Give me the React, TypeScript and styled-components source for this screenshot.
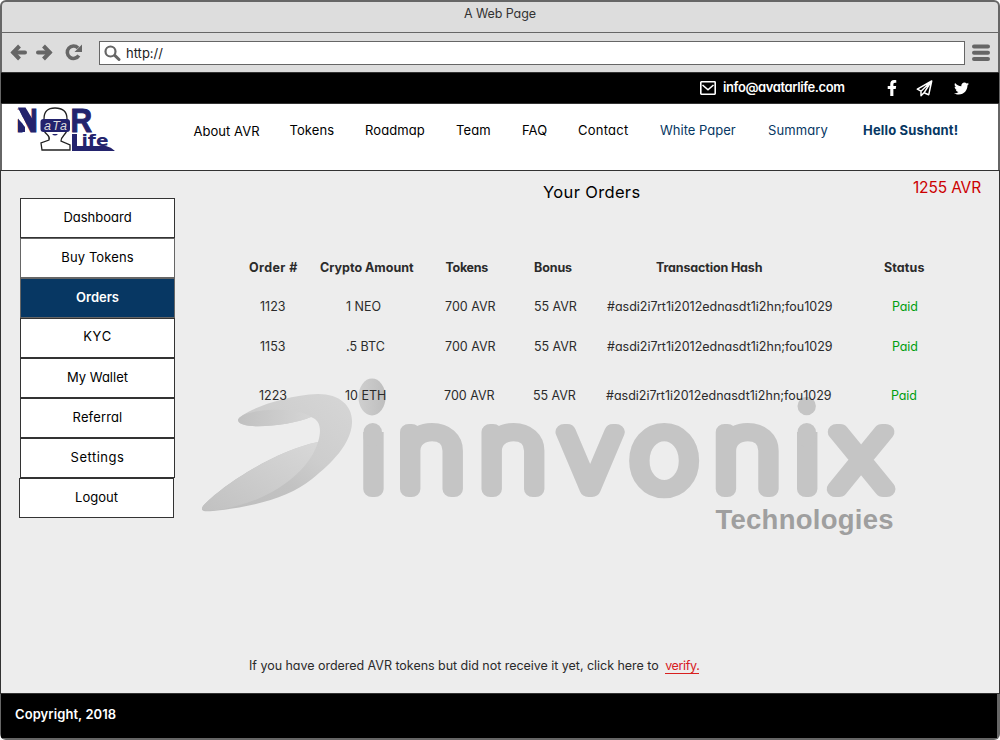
import React from "react";
import styled, { createGlobalStyle } from "styled-components";
import { FaFacebookF, FaTwitter } from "react-icons/fa";

const Global = createGlobalStyle`
  * { box-sizing: border-box; }
  body { margin: 0; background: #fff; }
  #root { font-family: Inter, "Liberation Sans", sans-serif; font-feature-settings: "cv11"; color: #000; font-size: 13px; }
`;

const Window = styled.div`
  width: 1000px; height: 740px; background: #666; border-radius: 6px;
  padding-top: 2px; display: flex; flex-direction: column; overflow: hidden;
`;
const TitleBar = styled.div`
  height: 30px; margin: 0 2px; background: #ddd; color: #333; font-size: 12.5px; letter-spacing: -0.1px;
  display: flex; justify-content: center; padding-top: 4px; line-height: 16px; border-top-left-radius: 4px; border-top-right-radius: 4px;
`;
const Toolbar = styled.div`
  height: 39px; margin: 1px 2px 0; background: #ddd; padding: 8px 6px 0 8px; display: flex; align-items: flex-start;
`;
const ToolIcon = styled.svg<{ $gap?: number }>`margin-top: 3px; margin-left: ${p => p.$gap ?? 0}px; flex: none;`;
const Address = styled.div`
  width: 866px; height: 24px; border: 1px solid #666; background: #fff; margin-left: 16px; margin-right: 7px; flex: none;
  display: flex; align-items: center; padding-left: 4px; gap: 5px; color: #222;
`;
const TopBar = styled.div`
  height: 32px; margin: 0 1px; background: #000; border-top: 1px solid #333; border-bottom: 1px solid #333;
  color: #fff; display: flex; align-items: center; padding-left: 699px;
`;
const Email = styled.span`font-weight: 600; margin: 0 0 2px 7px; width: 161px; letter-spacing: -0.4px;`;
const Social = styled.span<{ $w: number }>`width: ${p => p.$w}px; display: flex;`;
const Header = styled.header`
  height: 66px; margin: 0 2px; background: #fff; display: flex; padding-left: 14px;
`;
const Nav = styled.nav`display: flex; padding-top: 18px; margin-left: 75.5px;`;
const NavLink = styled.span<{ $w: number; $ls?: number; $blue?: boolean; $bold?: boolean; $drop?: boolean }>`
  width: ${p => p.$w}px; white-space: nowrap; line-height: 16px; letter-spacing: ${p => p.$ls ?? 0.1}px;
  color: ${p => (p.$blue ? "#073763" : "#000")}; font-weight: ${p => (p.$bold ? 700 : 400)};
  padding-top: ${p => (p.$drop ? 1 : 0)}px;
`;
const Body = styled.main`
  height: 524px; background: #ededed; border: 1px solid #333; display: flex; position: relative;
`;
const Side = styled.aside`padding: 27px 0 0 19px; width: 193px;`;
const SideItem = styled.div<{ $on?: boolean; $edge?: string; $up?: number; $ls?: number; $left?: boolean }>`
  width: 155px; height: 40px; border: 1px solid ${p => p.$edge ?? "#333"}; color: ${p => (p.$on ? "#fff" : "#000")};
  background: ${p => (p.$on ? "#073763" : "#fff")}; font-weight: ${p => (p.$on ? 600 : 400)};
  text-align: center; line-height: 16px; padding-top: ${p => 10 - (p.$up ?? 0)}px; letter-spacing: ${p => p.$ls ?? 0}px;
  margin-left: ${p => (p.$left ? -1 : 0)}px;
`;
const Content = styled.section`position: relative; width: 805px; padding-left: 55px;`;
const Heading = styled.h1`
  position: relative; margin: 11px 0 0 294px; font-size: 16.5px; font-weight: 400; line-height: 20px; letter-spacing: 0.35px;
`;
const Balance = styled.div`
  position: absolute; right: 18px; top: 7px; color: #c00; font-size: 15.5px; line-height: 20px; letter-spacing: -0.15px;
`;
const Row = styled.div<{ $cols: string; $gap: number; $start: number; $bold?: boolean }>`
  position: relative; display: grid; grid-template-columns: ${p => p.$cols}; margin: ${p => p.$gap}px 0 0 ${p => p.$start}px;
  line-height: 16px; font-size: 12.5px; color: #2b2b2b; white-space: nowrap; font-weight: ${p => (p.$bold ? 700 : 400)};
`;
const Cell = styled.span<{ $ls?: number; $paid?: boolean }>`
  letter-spacing: ${p => p.$ls ?? 0}px; color: ${p => (p.$paid ? "#009e0f" : "inherit")};
`;
const Note = styled.p`
  margin: 254px 0 0 0; font-size: 12.5px; line-height: 16px; color: #2b2b2b; white-space: nowrap; letter-spacing: -0.03px;
`;
const Verify = styled.a`color: #d8201f; border-bottom: 1px solid #d8201f; margin-left: 3px; letter-spacing: -0.35px;`;
const Watermark = styled.svg`position: absolute; left: 0; top: 199px;`;
const LogoArt = styled.svg`overflow: visible; flex: none;`;
const Footer = styled.footer`
  height: 44px; margin: 0 3px 2px 1px; background: #000; color: #fff; font-weight: 600; padding: 12px 14px; line-height: 16px;
  letter-spacing: 0.08px;
`;

const Arrow = ({ flip }: { flip?: boolean }) => (
  <ToolIcon width="17" height="17" viewBox="0 0 17 17" $gap={flip ? 9 : 0}>
    <g transform={flip ? "matrix(-1 0 0 1 17 0)" : undefined} fill="none" stroke="#666" strokeWidth="4">
      <path d="M3.500 8.500H15" strokeLinecap="round" />
      <path d="M9.500 2 3.200 8.500 9.500 15" />
    </g>
  </ToolIcon>
);

const Logo = () => (
  <LogoArt width="102" height="50" viewBox="0 0 102 50" fontFamily="Liberation Sans, sans-serif" fontWeight="700" fill="#23236d">
    <g fontSize="34" stroke="#23236d" strokeWidth="1">
      <text transform="translate(0.2 27.6) scale(0.88 1)">N</text>
      <text transform="translate(54.6 27.6) scale(0.88 1)">R</text>
    </g>
    <path d="M0 6 3 5.500 9.500 19V22L7 20 0 14Z" fill="#fff" />
    <path d="M2 3.500H9.500L17 16V26L10 19Z" />
    <path d="M2 14.500 9 23V28H2Z" />
    <path d="M28 15C28 7 32 4 39 4S51 7 51 15V26C50 31 45 32 45 37L54 41V46H26L25 39L33 36C35 31 29 31 28 26Z" fill="#fff" stroke="#222" strokeWidth="1.3" />
    <path d="M36 30Q39 33 42 30Z" />
    <rect x="24.5" y="15" width="29.5" height="13" rx="3" />
    <text x="28" y="26" fontSize="12.5" fontWeight="400" fontStyle="italic" fill="#ddd" textLength="23">aTa</text>
    <path d="M56 30H61V42H90Q95 43 99 47H56Z" />
    <text transform="translate(65.500 42) scale(1.16 1)" fontSize="16" fontFamily="DejaVu Sans">ife</text>
  </LogoArt>
);

const rows = [
  ["1123", "1 NEO"],
  ["1153", ".5 BTC"],
  ["1223", "10 ETH"],
];

export default function App() {
  return (
    <Window>
      <Global />
      <TitleBar>A Web Page</TitleBar>
      <Toolbar>
        <Arrow /><Arrow flip />
        <ToolIcon width="18" height="17" viewBox="0 0 18 17" $gap={12}>
          <path d="M13.8 11.5A6.2 6.2 0 1 1 13 4" fill="none" stroke="#666" strokeWidth="3.6" />
          <path d="M17 0.5V8H9.5Z" fill="#666" />
        </ToolIcon>
        <Address>
          <svg width="17" height="17" viewBox="0 0 17 17" fill="none" stroke="#666"><circle cx="6.5" cy="6.5" r="5" strokeWidth="2.2" /><path d="m11 10.7 4 3.8" strokeWidth="3" strokeLinecap="round" /></svg>
          http://
        </Address>
        <ToolIcon width="18" height="18" viewBox="0 0 18 18"><path d="M2 2.5H16M2 8.8H16M2 15H16" stroke="#666" strokeWidth="4" strokeLinecap="round" /></ToolIcon>
      </Toolbar>
      <TopBar>
        <svg width="16" height="14" viewBox="0 0 16 14" fill="none" stroke="#fff" strokeWidth="1.6"><rect x=".8" y=".8" width="14.4" height="12.4" rx=".6" /><path d="m2.5 4 5.5 4.8L13.500 4" /></svg>
        <Email>info@avatarlife.com</Email>
        <Social $w={32}><FaFacebookF size={16} /></Social>
        <Social $w={38}>
          <svg width="17" height="17" viewBox="0 0 17 17" fill="none" stroke="#fff" strokeWidth="1.5" strokeLinejoin="round">
            <path d="M15.700 1 1.300 9.200 5 11.200V15.800L8 12.800 12.700 14.800ZM5 11.200 15.200 1.500 8 12.800" />
          </svg>
        </Social>
        <Social $w={16}><FaTwitter size={15} /></Social>
      </TopBar>
      <Header>
        <Logo />
        <Nav>
          <NavLink $w={96} $drop $ls={0.05}>About AVR</NavLink>
          <NavLink $w={75.5}>Tokens</NavLink>
          <NavLink $w={91}>Roadmap</NavLink>
          <NavLink $w={66}>Team</NavLink>
          <NavLink $w={56}>FAQ</NavLink>
          <NavLink $w={82} $ls={0.25}>Contact</NavLink>
          <NavLink $w={108} $blue $ls={0}>White Paper</NavLink>
          <NavLink $w={95} $blue>Summary</NavLink>
          <NavLink $w={100} $blue $bold $ls={0.17}>Hello Sushant!</NavLink>
        </Nav>
      </Header>
      <Body>
        <Side>
          <SideItem>Dashboard</SideItem>
          <SideItem $edge="#666" $ls={0.1}>Buy Tokens</SideItem>
          <SideItem $edge="#666" $on>Orders</SideItem>
          <SideItem $up={1} $ls={0.7}>KYC</SideItem>
          <SideItem>My Wallet</SideItem>
          <SideItem $ls={0.15}>Referral</SideItem>
          <SideItem $ls={0.5}>Settings</SideItem>
          <SideItem $left>Logout</SideItem>
        </Side>
        <Content>
          <Watermark width="720" height="180" viewBox="194 370 720 180">
            <defs>
              <linearGradient id="swoosh" x1="1" y1="0" x2="0" y2="1"><stop offset="0" stopColor="#d6d6d6" /><stop offset="0.4" stopColor="#cdcdcd" /><stop offset="0.6" stopColor="#c2c2c2" /><stop offset="1" stopColor="#bdbdbd" /></linearGradient>
              <linearGradient id="wing" x1="0" y1="0" x2="1" y2="0"><stop offset="0" stopColor="#c0c0c0" /><stop offset="1" stopColor="#d5d5d5" /></linearGradient>
              <linearGradient id="dot" x1="0" y1="0" x2="1" y2="0"><stop offset="0" stopColor="#cfcfcf" /><stop offset="1" stopColor="#bebebe" /></linearGradient>
              <linearGradient id="tail" x1="0" y1="1" x2="1" y2="0"><stop offset="0" stopColor="#c1c1c1" /><stop offset="1" stopColor="#d8d8d8" /></linearGradient>
              <clipPath id="stems"><path d="M350 432H391V390H790V432H822V390H914V510H350Z" /></clipPath>
            </defs>
            <path d="M238 420C238 414 280 395 318 394C341 394 353 407 352 423C351 444 332 463 312 479C289 498 252 507 213 511C203 512 200 511 203 506C220 487 274 451 318 442C322 429 320 420 311 417C290 426 238 431 238 420Z" fill="url(#swoosh)" />
            <path d="M238 420C240 414 254 411 269 410C290 409 304 412 311 417C290 426 240 431 238 420Z" fill="url(#wing)" />
            <path d="M203 506C220 487 274 451 318 442C310 469 276 499 224 509C203 512 200 511 203 506Z" fill="url(#tail)" />
            <g clipPath="url(#stems)">
              <g transform="scale(1.11 1)" fontFamily="Inter" fontWeight="100" fontSize="104" fill="#c5c5c5" stroke="#c5c5c5" strokeWidth="16" strokeLinejoin="round">
                <text y="489" x="325.3 358.3 431.7 503.3 568.3 642.7 716 749.700">innvonix</text>
              </g>
            </g>
            <g fill="#c5c5c5">
              <rect x="363.500" y="423" width="18.500" height="24" rx="9.200" />
              <rect x="797.500" y="423" width="18.500" height="24" rx="9.200" />
              <circle cx="806.700" cy="406" r="9.200" />
            </g>
            <ellipse cx="372" cy="397" rx="13.500" ry="18.500" fill="url(#dot)" />
            <text x="715.500" y="529" fontFamily="Liberation Sans" fontWeight="700" fontSize="27.500" fill="#9f9f9f" textLength="178">Technologies</text>
          </Watermark>
          <Balance>1255 AVR</Balance>
          <Heading>Your Orders</Heading>
          <Row $gap={58} $start={0} $bold $cols="71px 125.500px 88.500px 122px 228px 60px">
            <Cell $ls={0.4}>Order #</Cell><Cell>Crypto Amount</Cell><Cell $ls={-0.3}>Tokens</Cell><Cell $ls={-0.1}>Bonus</Cell><Cell $ls={-0.15}>Transaction Hash</Cell><Cell $ls={0.1}>Status</Cell>
          </Row>
          {rows.map(([id, amount], i) => (
            <Row key={id} $gap={[23, 24, 33][i]} $start={i === 2 ? 10 : 11} $cols="86px 99px 89px 73px 285px 40px">
              <Cell>{id}</Cell><Cell>{amount}</Cell><Cell>700 AVR</Cell><Cell $ls={-0.05}>55 AVR</Cell>
              <Cell>#asdi2i7rt1i2012ednasdt1i2hn;fou1029</Cell><Cell $paid $ls={-0.1}>Paid</Cell>
            </Row>
          ))}
          <Note>If you have ordered AVR tokens but did not receive it yet, click here to <Verify>verify.</Verify></Note>
        </Content>
      </Body>
      <Footer>Copyright, 2018</Footer>
    </Window>
  );
}
